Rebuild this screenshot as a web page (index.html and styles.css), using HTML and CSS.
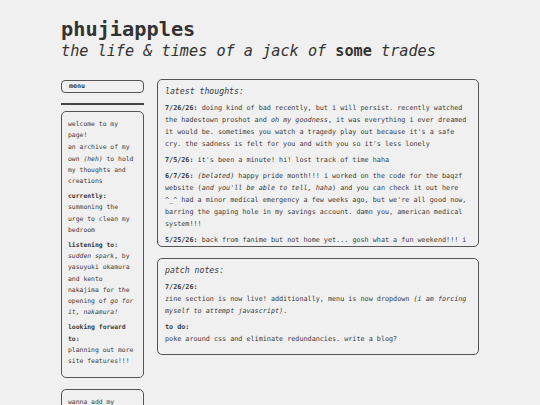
FILE: index.html
```html
<!DOCTYPE html>
<html>
<head>
<meta charset="utf-8">
<link rel="stylesheet" href="styles.css">
</head>
<body>
<div class="page">
  <header class="masthead">
    <h1 class="title">phujiapples</h1>
    <p class="tagline">the life &amp; times of a jack of <b>some</b> trades</p>
  </header>
  <div class="layout">
    <aside class="sidebar">
      <div class="menu-btn">menu</div>
      <hr class="rule">
      <div class="side-box">
        <p class="intro">welcome to my page!</p>
        <p class="intro2">an archive of my own <em>(heh)</em> to hold my thoughts and creations</p>
        <p class="label">currently:</p>
        <p>summoning the urge to clean my bedroom</p>
        <p class="label">listening to:</p>
        <p><em>sudden spark</em>, by yasuyuki okamura and kento nakajima for the opening of <em>go for it, nakamura!</em></p>
        <p class="label">looking forward to:</p>
        <p>planning out more site features!!!</p>
      </div>
      <div class="side-box second">
        <p>wanna add my button to your site?</p>
      </div>
    </aside>
    <main class="main">
      <section class="card thoughts">
        <h2 class="card-title">latest thoughts:</h2>
        <p class="entry"><b>7/26/26:</b> doing kind of bad recently, but i will persist. recently watched the hadestown proshot and <em>oh my goodness</em>, it was everything i ever dreamed it would be. sometimes you watch a tragedy play out because it's a safe cry. the sadness is felt for you and with you so it's less lonely</p>
        <p class="entry"><b>7/5/26:</b> it's been a minute! hi! lost track of time haha</p>
        <p class="entry"><b>6/7/26:</b> <em>(belated)</em> happy pride month!!! i worked on the code for the baqzf website (<em>and you'll be able to tell, haha</em>) and you can check it out here ^_^ had a minor medical emergency a few weeks ago, but we're all good now, barring the gaping hole in my savings account. damn you, american medical system!!!</p>
        <p class="entry"><b>5/25/26:</b> back from fanime but not home yet... gosh what a fun weekend!!! i got to meet so many lovely people and see so many cool cosplays</p>
      </section>
      <section class="card notes">
        <h2 class="card-title">patch notes:</h2>
        <p class="entry"><b>7/26/26:</b><br>zine section is now live! additionally, menu is now dropdown <em>(i am forcing myself to attempt javascript)</em>.</p>
        <p class="entry"><b>to do:</b><br>poke around css and eliminate redundancies. write a blog?</p>
      </section>
    </main>
  </div>
</div>
</body>
</html>
```

FILE: styles.css
```css
html, body {
  margin: 0;
  padding: 0;
  background: #f0f0f0;
  color: #3a3a3a;
  font-family: "DejaVu Sans Mono", "Liberation Mono", monospace;
}

.page {
  padding: 18px 0 0 61px;
  width: 418px;
}

.masthead {
  margin-bottom: 19px;
}

.title {
  margin: 0;
  font-size: 20.3px;
  line-height: 22px;
  font-weight: bold;
  color: #333;
}

.tagline {
  margin: 2px 0 0 0;
  font-size: 15.2px;
  line-height: 18px;
  font-style: italic;
  color: #333;
}

.tagline b {
  font-style: normal;
  font-weight: bold;
}

.layout {
  display: flex;
  align-items: flex-start;
  gap: 13px;
}

.sidebar {
  width: 83px;
  flex: none;
  padding-top: 1px;
  font-size: 6.4px;
  line-height: 11.2px;
}

.menu-btn {
  border: 1px solid #555;
  border-radius: 4px;
  padding: 0 7px;
  line-height: 11px;
  font-size: 6.6px;
  font-weight: bold;
}

.rule {
  border: 0;
  border-top: 2px solid #444;
  margin: 10px 0 6px 0;
  height: 0;
}

.side-box {
  border: 1px solid #555;
  border-radius: 5px;
  padding: 7px 8px 10px 6px;
}

.side-box.second {
  margin-top: 11px;
}

.side-box p {
  margin: 0;
}

.side-box .intro2 {
  margin-top: 1px;
}

.side-box .label {
  margin-top: 4px;
  font-weight: bold;
}

.main {
  width: 322px;
  flex: none;
}

.card {
  border: 1px solid #555;
  border-radius: 5px;
  padding: 5px 7px;
  font-size: 6.78px;
  line-height: 12px;
}

.thoughts {
  height: 156px;
  overflow: hidden;
}

.notes {
  margin-top: 11px;
}

.card-title {
  margin: 0 0 5px 0;
  font-size: 8.2px;
  line-height: 12px;
  font-weight: normal;
  font-style: italic;
  color: #3a3a3a;
}

.entry {
  margin: 0 0 4px 0;
}

.entry b {
  font-weight: bold;
}
```
